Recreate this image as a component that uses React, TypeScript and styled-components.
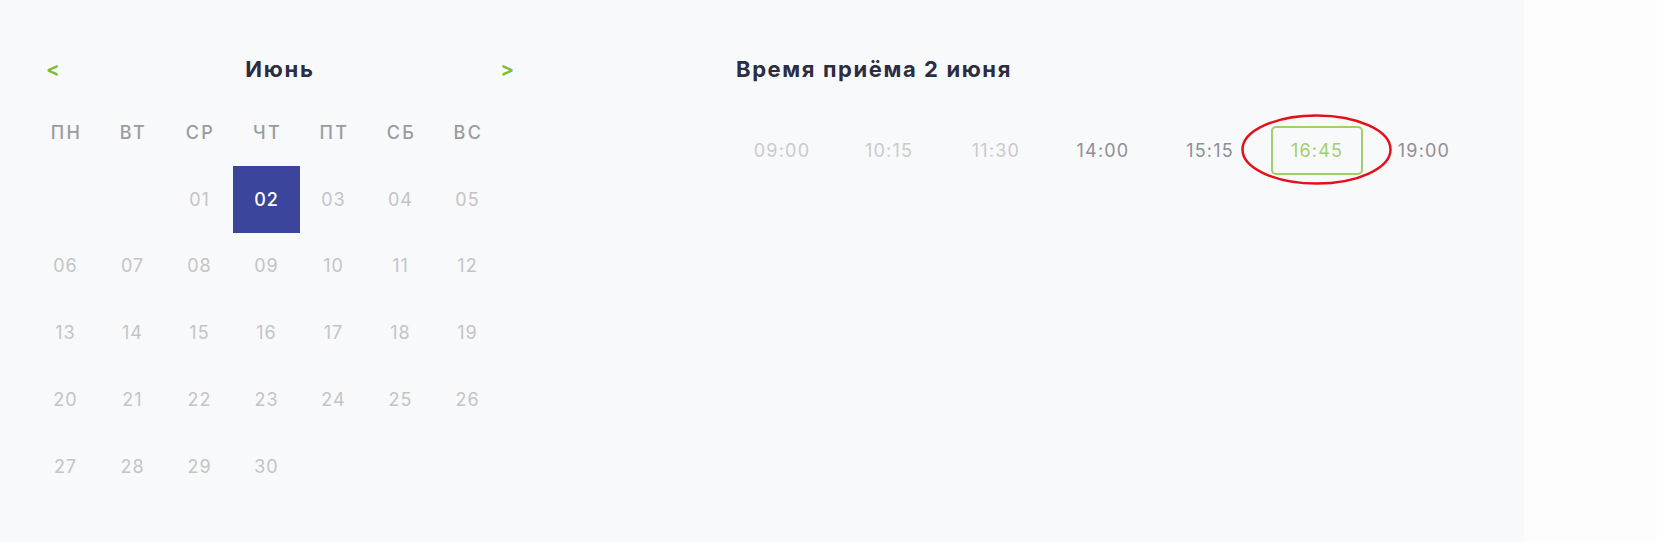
import React, { FC } from 'react';
import styled, { createGlobalStyle } from 'styled-components';

const GlobalStyle = createGlobalStyle`
	html, body {
		margin: 0;
		padding: 0;
		background: #fdfdfe;
	}
	body {
		font-family: Inter, 'Noto Sans', 'DejaVu Sans', sans-serif;
	}
`;

const COLORS = {
	bg: '#f8f9fb',
	dark: '#2c2d42',
	green: '#7dbd3b',
	slotGreen: '#a3cf6a',
	indigo: '#3c459c',
	weekday: '#9b9b9e',
	date: '#c4c4c6',
	timeOff: '#c9cacd',
	timeOn: '#8d8f95',
};

const WEEKDAYS = ['ПН', 'ВТ', 'СР', 'ЧТ', 'ПТ', 'СБ', 'ВС'];

type Slot = { time: string; available: boolean; selected?: boolean };

const SLOTS: Slot[] = [
	{ time: '09:00', available: false },
	{ time: '10:15', available: false },
	{ time: '11:30', available: false },
	{ time: '14:00', available: true },
	{ time: '15:15', available: true },
	{ time: '16:45', available: true, selected: true },
	{ time: '19:00', available: true },
];

const Page = styled.div`
	width: 1524px;
	height: 542px;
	background: ${COLORS.bg};
	display: flex;
	align-items: flex-start;
	box-sizing: border-box;
	padding: 49px 0 0 32px;
`;

const Calendar = styled.section`
	width: 498px;
	display: flex;
	flex-direction: column;
`;

const CalendarHeader = styled.div`
	height: 40px;
	margin-bottom: 10px;
	display: flex;
	align-items: center;
	justify-content: space-between;
	padding: 0 16px 0 14px;
`;

const NavArrow = styled.button`
	border: none;
	background: none;
	padding: 0;
	margin: 0;
	cursor: pointer;
	color: ${COLORS.green};
	font-family: inherit;
	font-size: 20px;
	font-weight: 700;
	line-height: 1;
`;

const MonthTitle = styled.h2`
	margin: 0;
	font-size: 22px;
	font-weight: 700;
	letter-spacing: 1.8px;
	color: ${COLORS.dark};
`;

const DaysGrid = styled.div`
	width: 469px;
	display: grid;
	grid-template-columns: repeat(7, 67px);
	grid-auto-rows: 66.8px;
`;

const Weekday = styled.div`
	display: flex;
	align-items: center;
	justify-content: center;
	font-size: 18px;
	font-weight: 500;
	letter-spacing: 2.4px;
	padding-left: 2px;
	color: ${COLORS.weekday};
`;

const DayCell = styled.div<{ $selected?: boolean; $col?: number }>`
	display: flex;
	align-items: center;
	justify-content: center;
	font-size: 18px;
	font-weight: ${(p) => (p.$selected ? 500 : 400)};
	letter-spacing: 1px;
	color: ${(p) => (p.$selected ? '#ffffff' : COLORS.date)};
	background: ${(p) => (p.$selected ? COLORS.indigo : 'transparent')};
	${(p) => (p.$col ? `grid-column-start: ${p.$col};` : '')}
	cursor: pointer;
`;

const TimePanel = styled.section`
	margin-left: 206px;
	display: flex;
	flex-direction: column;
`;

const TimeTitle = styled.h2`
	margin: 0 0 37px;
	height: 40px;
	display: flex;
	align-items: center;
	font-size: 22px;
	font-weight: 700;
	letter-spacing: 1.6px;
	color: ${COLORS.dark};
`;

const SlotList = styled.div`
	display: flex;
	gap: 15px;
`;

const SlotButton = styled.button<{ $available: boolean; $selected?: boolean }>`
	position: relative;
	width: 92px;
	height: 49px;
	box-sizing: border-box;
	margin: 0;
	padding: 0;
	background: none;
	border: 2px solid ${(p) => (p.$selected ? COLORS.slotGreen : 'transparent')};
	border-radius: 5px;
	font-family: inherit;
	font-size: 18px;
	font-weight: 400;
	letter-spacing: 1.2px;
	color: ${(p) =>
		p.$selected ? COLORS.slotGreen : p.$available ? COLORS.timeOn : COLORS.timeOff};
	cursor: ${(p) => (p.$available ? 'pointer' : 'default')};
`;

const Highlight = styled.svg`
	position: absolute;
	left: -32px;
	top: -14px;
	width: 151px;
	height: 71px;
	overflow: visible;
	pointer-events: none;
`;

const App: FC = () => {
	const days = Array.from({ length: 30 }, (_, i) => i + 1);

	return (
		<>
			<GlobalStyle />
			<Page>
				<Calendar>
					<CalendarHeader>
						<NavArrow aria-label="Предыдущий месяц">&lt;</NavArrow>
						<MonthTitle>Июнь</MonthTitle>
						<NavArrow aria-label="Следующий месяц">&gt;</NavArrow>
					</CalendarHeader>

					<DaysGrid>
						{WEEKDAYS.map((w) => (
							<Weekday key={w}>{w}</Weekday>
						))}
						{days.map((d) => (
							<DayCell key={d} $selected={d === 2} $col={d === 1 ? 3 : undefined}>
								{String(d).padStart(2, '0')}
							</DayCell>
						))}
					</DaysGrid>
				</Calendar>

				<TimePanel>
					<TimeTitle>Время приёма 2 июня</TimeTitle>
					<SlotList>
						{SLOTS.map((s) => (
							<SlotButton
								key={s.time}
								$available={s.available}
								$selected={s.selected}
								disabled={!s.available}
							>
								{s.time}
								{s.selected && (
									<Highlight viewBox="0 0 151 71">
										<ellipse
											cx="75.5"
											cy="35.5"
											rx="74"
											ry="34"
											fill="none"
											stroke="#e3101a"
											strokeWidth="2.5"
										/>
									</Highlight>
								)}
							</SlotButton>
						))}
					</SlotList>
				</TimePanel>
			</Page>
		</>
	);
};

export default App;
